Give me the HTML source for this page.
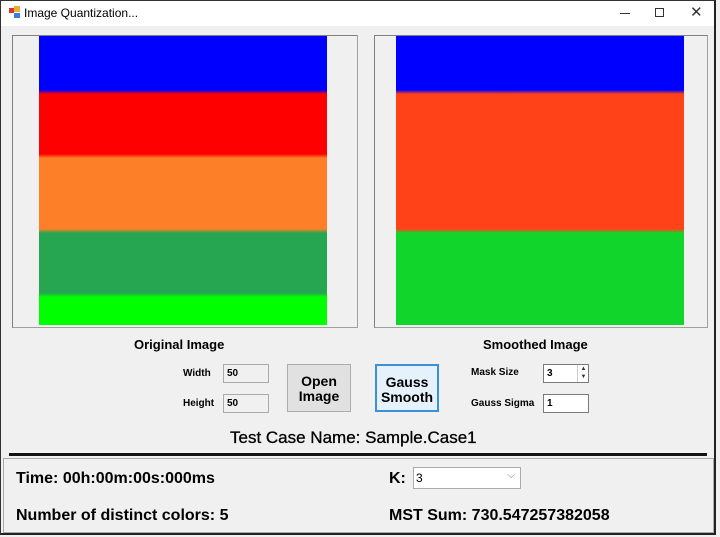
<!DOCTYPE html><html><head><style>
body{margin:0;width:720px;height:537px;background:#f0f0f0;font-family:"Liberation Sans",sans-serif;position:relative;overflow:hidden}
.a{position:absolute}
.win{left:0;top:0;width:716px;height:535px;border:1px solid #333;border-right:2px solid #222;border-bottom:2px solid #222;box-sizing:border-box;position:absolute}
.tb{left:0;top:0;width:716px;height:26px;background:#fff}
.pic{border:1px solid #a0a0a0;border-top-color:#808080;border-left-color:#808080;box-sizing:border-box;background:#f0f0f0}
.b{font-weight:bold;font-size:13px}
.sm{font-weight:bold;font-size:10px}
.tx{background:#f0f0f0;border:1px solid #aaa;box-sizing:border-box;font-size:10px;font-weight:bold;padding:3px 0 0 3px}
.tw{background:#fff;border:1px solid #7a7a7a}
.btn{background:#e1e1e1;border:1px solid #adadad;box-sizing:border-box;text-align:center;font-weight:bold;font-size:14px;line-height:15px}
.big{font-size:16px;font-weight:bold}
</style></head><body>
<div class="a tb"></div>
<div class="a" style="left:9px;top:8px;width:5px;height:5px;background:#d33"></div>
<div class="a" style="left:14px;top:6px;width:6px;height:6px;background:#e8b030"></div>
<div class="a" style="left:14px;top:13px;width:6px;height:5px;background:#3a7fd5"></div>
<div class="a" style="left:24px;top:6px;font-size:12px">Image Quantization...</div>
<div class="a" style="left:620px;top:13px;width:10px;height:1px;background:#333"></div>
<div class="a" style="left:655px;top:8px;width:9px;height:9px;border:1px solid #333;box-sizing:border-box"></div>
<div class="a" style="left:690px;top:3px;font-size:15px;color:#333">✕</div>

<div class="a pic" style="left:12px;top:35px;width:346px;height:293px"></div>
<div class="a" style="left:39px;top:36px;width:288px;height:289px;background:linear-gradient(#0000ff 0,#0000ff 54px,#ff0000 58px,#ff0000 118px,#fd8028 122px,#fd8028 193px,#26a650 197px,#26a650 257px,#00ff00 261px)"></div>
<div class="a pic" style="left:374px;top:35px;width:334px;height:293px"></div>
<div class="a" style="left:396px;top:36px;width:288px;height:289px;background:linear-gradient(#0000ff 0,#0000ff 54px,#ff4218 58px,#ff4218 193px,#12d52c 197px)"></div>

<div class="a b" style="left:134px;top:337px">Original Image</div>
<div class="a b" style="left:483px;top:337px">Smoothed Image</div>
<div class="a sm" style="left:183px;top:368px">Width</div>
<div class="a sm" style="left:183px;top:398px">Height</div>
<div class="a tx" style="left:223px;top:364px;width:46px;height:19px">50</div>
<div class="a tx" style="left:223px;top:394px;width:46px;height:19px">50</div>
<div class="a btn" style="left:287px;top:364px;width:64px;height:48px;padding-top:9px">Open<br>Image</div>
<div class="a btn" style="left:375px;top:364px;width:64px;height:48px;padding-top:9px;border:2px solid #3c8fdc;background:#e5f1fb">Gauss<br>Smooth</div>
<div class="a sm" style="left:471px;top:367px">Mask Size</div>
<div class="a sm" style="left:471px;top:398px">Gauss Sigma</div>
<div class="a tx tw" style="left:543px;top:364px;width:46px;height:19px">3</div>
<div class="a" style="left:577px;top:365px;width:11px;height:17px;border-left:1px solid #ccc;font-size:6px;line-height:8px;text-align:center;color:#333">▲<br>▼</div>
<div class="a tx tw" style="left:543px;top:394px;width:46px;height:19px">1</div>
<div class="a" style="left:230px;top:428px;font-size:17px;-webkit-text-stroke:0.3px #000">Test Case Name: Sample.Case1</div>
<div class="a" style="left:9px;top:453px;width:698px;height:3px;background:#111"></div>
<div class="a" style="left:3px;top:458px;width:711px;height:75px;border:1px solid #aaa;box-sizing:border-box"></div>
<div class="a big" style="left:16px;top:470px">Time: 00h:00m:00s:000ms</div>
<div class="a big" style="left:16px;top:507px">Number of distinct colors: 5</div>
<div class="a big" style="left:389px;top:470px">K:</div>
<div class="a" style="left:413px;top:467px;width:108px;height:22px;background:#fff;border:1px solid #aaa;box-sizing:border-box;font-size:12px;padding:3px 2px">3<span style="position:absolute;right:5px;top:2px;color:#777;font-size:10px">⌵</span></div>
<div class="a big" style="left:389px;top:507px">MST Sum: 730.547257382058</div>
<div class="win"></div>
</body></html>
